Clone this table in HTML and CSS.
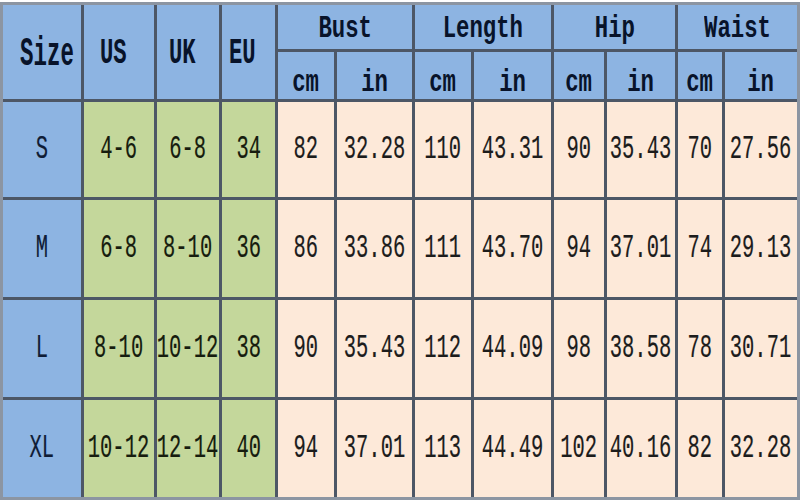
FILE: index.html
```html
<!DOCTYPE html>
<html>
<head>
<meta charset="utf-8">
<link rel="stylesheet" href="styles.css">
</head>
<body>
<div class="chart">
  <div class="c hd tall size"><span class="big">Size</span></div>
  <div class="c hd tall shift"><span class="mid">US</span></div>
  <div class="c hd tall shift"><span class="mid">UK</span></div>
  <div class="c hd tall shift"><span class="mid">EU</span></div>
  <div class="c hd wide"><span class="top">Bust</span></div>
  <div class="c hd wide"><span class="top">Length</span></div>
  <div class="c hd wide"><span class="top">Hip</span></div>
  <div class="c hd wide"><span class="top">Waist</span></div>
  <div class="c hd sub"><span class="unit">cm</span></div>
  <div class="c hd sub"><span class="unit">in</span></div>
  <div class="c hd sub"><span class="unit">cm</span></div>
  <div class="c hd sub"><span class="unit">in</span></div>
  <div class="c hd sub"><span class="unit">cm</span></div>
  <div class="c hd sub"><span class="unit">in</span></div>
  <div class="c hd sub"><span class="unit">cm</span></div>
  <div class="c hd sub"><span class="unit">in</span></div>

  <div class="c sz"><span class="v">S</span></div>
  <div class="c gr"><span class="v">4-6</span></div>
  <div class="c gr"><span class="v">6-8</span></div>
  <div class="c gr"><span class="v">34</span></div>
  <div class="c pc"><span class="v">82</span></div>
  <div class="c pc"><span class="v">32.28</span></div>
  <div class="c pc"><span class="v">110</span></div>
  <div class="c pc"><span class="v">43.31</span></div>
  <div class="c pc"><span class="v">90</span></div>
  <div class="c pc"><span class="v">35.43</span></div>
  <div class="c pc"><span class="v">70</span></div>
  <div class="c pc"><span class="v">27.56</span></div>

  <div class="c sz"><span class="v">M</span></div>
  <div class="c gr"><span class="v">6-8</span></div>
  <div class="c gr"><span class="v">8-10</span></div>
  <div class="c gr"><span class="v">36</span></div>
  <div class="c pc"><span class="v">86</span></div>
  <div class="c pc"><span class="v">33.86</span></div>
  <div class="c pc"><span class="v">111</span></div>
  <div class="c pc"><span class="v">43.70</span></div>
  <div class="c pc"><span class="v">94</span></div>
  <div class="c pc"><span class="v">37.01</span></div>
  <div class="c pc"><span class="v">74</span></div>
  <div class="c pc"><span class="v">29.13</span></div>

  <div class="c sz"><span class="v">L</span></div>
  <div class="c gr"><span class="v">8-10</span></div>
  <div class="c gr"><span class="v">10-12</span></div>
  <div class="c gr"><span class="v">38</span></div>
  <div class="c pc"><span class="v">90</span></div>
  <div class="c pc"><span class="v">35.43</span></div>
  <div class="c pc"><span class="v">112</span></div>
  <div class="c pc"><span class="v">44.09</span></div>
  <div class="c pc"><span class="v">98</span></div>
  <div class="c pc"><span class="v">38.58</span></div>
  <div class="c pc"><span class="v">78</span></div>
  <div class="c pc"><span class="v">30.71</span></div>

  <div class="c sz"><span class="v">XL</span></div>
  <div class="c gr"><span class="v">10-12</span></div>
  <div class="c gr"><span class="v">12-14</span></div>
  <div class="c gr"><span class="v">40</span></div>
  <div class="c pc"><span class="v">94</span></div>
  <div class="c pc"><span class="v">37.01</span></div>
  <div class="c pc"><span class="v">113</span></div>
  <div class="c pc"><span class="v">44.49</span></div>
  <div class="c pc"><span class="v">102</span></div>
  <div class="c pc"><span class="v">40.16</span></div>
  <div class="c pc"><span class="v">82</span></div>
  <div class="c pc"><span class="v">32.28</span></div>
</div>
</body>
</html>
```
FILE: styles.css
```css
html, body {
  margin: 0;
  padding: 0;
  background: #ffffff;
}

.chart {
  box-sizing: border-box;
  width: 800px;
  height: 498px;
  margin-top: 2px;
  display: grid;
  grid-template-columns: 78px 70px 62px 53px 56px 75px 56px 77px 50px 68px 44px 72px;
  grid-template-rows: 44px 47px 95px 97px 97px 97px;
  gap: 3px;
  border: 3px solid #8c95a2;
  background: #4d5766;
  font-family: "Liberation Mono", "DejaVu Sans Mono", monospace;
}

.c {
  display: flex;
  align-items: center;
  justify-content: center;
  overflow: hidden;
}

.c span {
  display: inline-block;
  white-space: pre;
}

.hd {
  background: #8db4e2;
  color: #08132a;
  font-weight: bold;
}

.tall {
  grid-row: span 2;
}

.wide {
  grid-column: span 2;
}

.shift span {
  margin-right: 12px;
}

.size span {
  margin-left: 10px;
}

.big {
  font-size: 40px;
  transform: scaleX(0.56);
  margin-top: 4px;
}

.mid {
  font-size: 37px;
  transform: scaleX(0.6);
  margin-top: 2px;
}

.top {
  font-size: 31px;
  transform: scaleX(0.72);
  margin-top: 3px;
}

.unit {
  font-size: 31px;
  transform: scaleX(0.72);
  margin-top: 14px;
}

.sz {
  background: #8db4e2;
  color: #0f1c36;
}

.gr {
  background: #c4d79b;
  color: #161c0e;
}

.pc {
  background: #fde9d9;
  color: #1c1c1c;
}

.v {
  font-size: 33px;
  transform: scaleX(0.62);
  -webkit-text-stroke: 0.2px currentColor;
}
```
